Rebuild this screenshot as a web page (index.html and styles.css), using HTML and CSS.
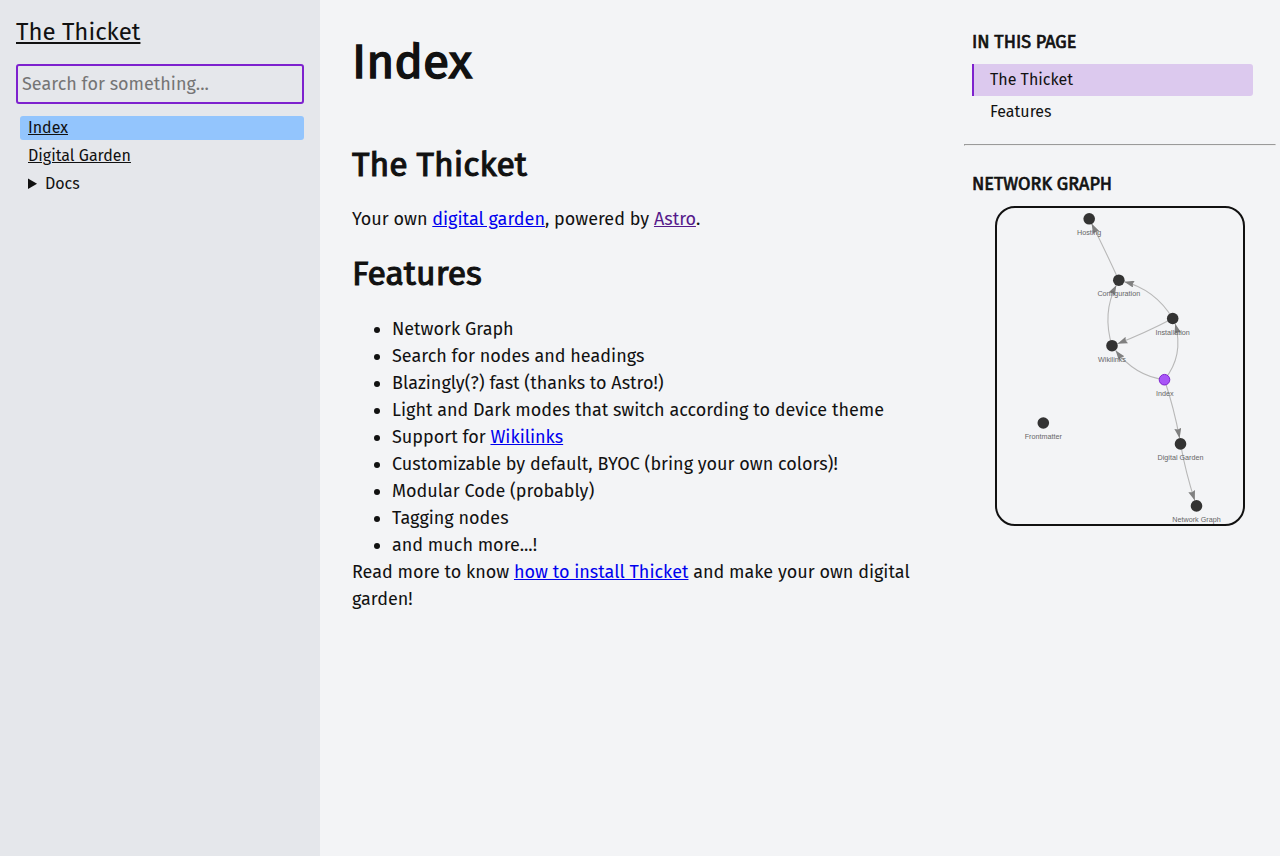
FILE: index.html
```html
<!DOCTYPE html>
<html lang="en">
<head>
<meta charset="utf-8">
<title>The Thicket</title>
<link rel="stylesheet" href="styles.css">
</head>
<body>
<div class="layout">
  <aside class="sidebar">
    <a class="brand" href="#">The Thicket</a>
    <input class="search" type="text" placeholder="Search for something...">
    <nav class="tree">
      <a class="tree-item active" href="#">Index</a>
      <a class="tree-item" href="#">Digital Garden</a>
      <details class="tree-item"><summary>Docs</summary></details>
    </nav>
  </aside>
  <main class="content">
    <h1>Index</h1>
    <h2>The Thicket</h2>
    <p>Your own <a class="link" href="#">digital garden</a>, powered by <a class="link visited" href="#">Astro</a>.</p>
    <h2>Features</h2>
    <ul>
      <li>Network Graph</li>
      <li>Search for nodes and headings</li>
      <li>Blazingly(?) fast (thanks to Astro!)</li>
      <li>Light and Dark modes that switch according to device theme</li>
      <li>Support for <a class="link" href="#">Wikilinks</a></li>
      <li>Customizable by default, BYOC (bring your own colors)!</li>
      <li>Modular Code (probably)</li>
      <li>Tagging nodes</li>
      <li>and much more...!</li>
    </ul>
    <p>Read more to know <a class="link" href="#">how to install Thicket</a> and make your own digital garden!</p>
  </main>
  <aside class="rail">
    <section class="toc">
      <h3>IN THIS PAGE</h3>
      <a class="toc-item current" href="#">The Thicket</a>
      <a class="toc-item" href="#">Features</a>
    </section>
    <hr>
    <section class="network">
      <h3>NETWORK GRAPH</h3>
      <div class="graph">
        <svg width="246" height="316" viewBox="997 208 246 316">
          <defs>
            <marker id="arrow" viewBox="0 0 10 7" refX="10" refY="3.5" markerWidth="10" markerHeight="7" markerUnits="userSpaceOnUse" orient="auto">
              <path class="arrow" d="M0 0L10 3.5L0 7L1.200 3.500Z"/>
            </marker>
          </defs>
          <g class="edges">
            <path d="M1118.8 280.2Q1105.5 251 1091.6 223.6" marker-end="url(#arrow)"/>
            <path d="M1172.7 318.5Q1155 289.5 1124.2 281.8" marker-end="url(#arrow)"/>
            <path d="M1172.7 318.5Q1145 333 1117.5 343.7" marker-end="url(#arrow)"/>
            <path d="M1112 345.7Q1102 313 1116.3 285.2" marker-end="url(#arrow)"/>
            <path d="M1164.5 379.7Q1135 376 1115.6 350.4" marker-end="url(#arrow)"/>
            <path d="M1164.5 379.7Q1184 356 1175.2 323.7" marker-end="url(#arrow)"/>
            <path d="M1164.5 379.7Q1174 408 1179.6 438.2" marker-end="url(#arrow)"/>
            <path d="M1180.5 443.9Q1186 474 1194.8 500.6" marker-end="url(#arrow)"/>
          </g>
          <g class="nodes">
            <circle cx="1089.2" cy="218.8" r="5.8"/>
            <circle cx="1118.8" cy="280.2" r="5.8"/>
            <circle cx="1172.7" cy="318.5" r="5.8"/>
            <circle cx="1112" cy="345.7" r="5.8"/>
            <circle class="here" cx="1164.5" cy="379.7" r="5.3"/>
            <circle cx="1043.3" cy="423" r="5.8"/>
            <circle cx="1180.5" cy="443.9" r="5.8"/>
            <circle cx="1196.5" cy="505.9" r="5.8"/>
          </g>
          <g class="labels">
            <text x="1089.2" y="235">Hosting</text>
            <text x="1118.8" y="296.2">Configuration</text>
            <text x="1172.7" y="335">Installation</text>
            <text x="1112" y="362">Wikilinks</text>
            <text x="1164.7" y="396">Index</text>
            <text x="1043.3" y="439">Frontmatter</text>
            <text x="1180.5" y="460">Digital Garden</text>
            <text x="1196.5" y="522">Network Graph</text>
          </g>
        </svg>
      </div>
    </section>
  </aside>
</div>
</body>
</html>
```
FILE: styles.css
```css
* { box-sizing: border-box; }
body {
  margin: 0;
  font: 18px/27px "Fira Sans", "Noto Sans", sans-serif;
  color: #111;
  background: #f3f4f6;
}
.layout { display: flex; height: 856px; overflow: hidden; }
.sidebar {
  flex: 0 0 320px;
  padding: 16px;
  background: #e5e7eb;
  display: flex;
  flex-direction: column;
}
.brand { align-self: flex-start; font-size: 24px; line-height: 32px; color: #111; }
.search {
  margin: 16px 0 12px;
  height: 40px;
  padding: 4px;
  border: 2px solid #7e22ce;
  border-radius: 3px;
  background: transparent;
  font: 18px "Fira Sans", "Noto Sans", sans-serif;
}
.search::placeholder { color: #757575; }
.tree { display: flex; flex-direction: column; gap: 4px; padding-left: 4px; }
.tree-item {
  padding: 0 8px;
  font-size: 16px;
  line-height: 24px;
  color: #111;
  border-radius: 3px;
}
.tree-item.active { background: #93c5fd; }
.content { flex: 0 0 640px; padding: 32px 32px 0; }
h1, h2, h3 { margin: 0; font-weight: 400; }
h1 { font-size: 48px; line-height: 60px; margin-bottom: 48px; -webkit-text-stroke: 1.5px; }
h2 { font-size: 33.75px; line-height: 50px; margin-bottom: 16px; -webkit-text-stroke: 1.05px; }
p { margin: 0; }
p + h2 { margin-top: 16px; margin-bottom: 17px; }
ul { margin: 0; padding-left: 40px; }
.link { color: #0000ee; }
.link.visited { color: #551a8b; }
.rail { flex: 0 0 320px; padding: 28px 4px; }
.toc { padding: 0 23px 0 8px; display: flex; flex-direction: column; }
h3 { font-size: 18px; line-height: 28px; -webkit-text-stroke: 0.7px; }
.toc h3 { margin-bottom: 8px; }
.toc-item {
  padding-left: 16px;
  border-left: 2px solid transparent;
  font-size: 16px;
  line-height: 32px;
  color: #111;
  text-decoration: none;
}
.toc-item.current {
  background: #dcc9ee;
  border-left-color: #7e22ce;
  border-radius: 0 3px 3px 0;
}
hr { margin: 16px 0 24px; }
.network h3 { margin-left: 8px; margin-bottom: 8px; }
.graph {
  width: 250px;
  height: 320px;
  margin: 0 auto;
  border: 2px solid #111;
  border-radius: 20px;
  overflow: hidden;
}
.graph svg { display: block; }
.edges path { fill: none; stroke: #b8b8b8; stroke-width: 1.1; }
.arrow { fill: #808080; }
.nodes circle { fill: #333; }
.nodes .here { fill: #a855f7; stroke: #7e22ce; stroke-width: 1; }
.labels text {
  font: 7.2px "Liberation Sans", sans-serif;
  fill: #666;
  text-anchor: middle;
}
```
